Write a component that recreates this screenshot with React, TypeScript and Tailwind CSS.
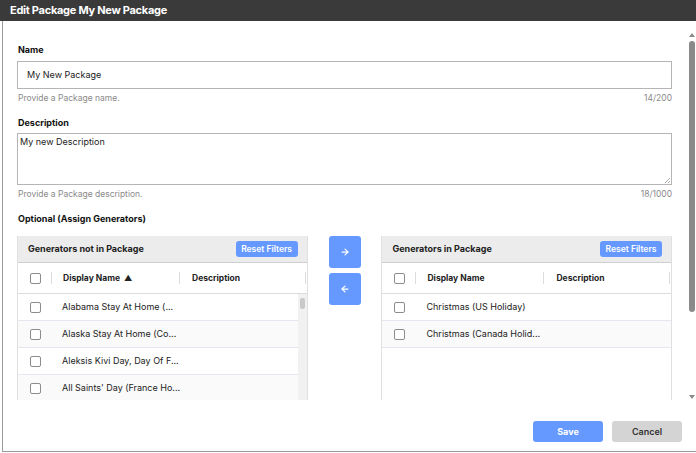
import { ArrowRight, ArrowLeft } from "lucide-react";

const leftRows = [
  "Alabama Stay At Home (...",
  "Alaska Stay At Home (Co...",
  "Aleksis Kivi Day, Day Of F...",
  "All Saints' Day (France Ho...",
];

const rightRows = ["Christmas (US Holiday)", "Christmas (Canada Holid..."];

function Box() {
  return <div className="w-[11px] h-[11px] border border-[#8c8c8c] rounded-[2px] bg-white" />;
}

function Grid({
  title,
  rows,
  sorted,
  scroll,
}: {
  title: string;
  rows: string[];
  sorted?: boolean;
  scroll?: boolean;
}) {
  return (
    <div className="flex flex-col w-[291px] h-[166px] overflow-hidden border-x border-[#e0e0e0]">
      {/* grid title bar */}
      <div className="h-[27px] shrink-0 bg-[#ececec] border-b border-[#cfcfcf] flex items-center justify-between pl-[10px] pr-[9px]">
        <span className="text-[9px] font-bold text-[#222]">{title}</span>
        <button className="h-[16px] w-[62px] rounded-[3px] bg-[#6699ff] text-white text-[8.5px] font-semibold">
          Reset Filters
        </button>
      </div>
      {/* column headers */}
      <div className="h-[31px] shrink-0 bg-white border-b border-[#dcdcdc] flex items-center text-[8.5px] font-bold text-[#222]">
        <div className="w-[33px] flex justify-end pr-[10px]">
          <Box />
        </div>
        <div className="w-px h-[12px] bg-[#dcdcdc]" />
        <div className="w-[127px] pl-[11px] flex items-center gap-[4px]">
          Display Name
          {sorted && <span className="text-[8px]">▲</span>}
        </div>
        <div className="w-px h-[12px] bg-[#dcdcdc]" />
        <div className="flex-1 pl-[12px]">Description</div>
        <div className="w-px h-[12px] bg-[#dcdcdc] mr-[1px]" />
      </div>
      <div className="flex flex-1">
        <div className="flex-1 flex flex-col">
          {rows.map((r, i) => (
            <div
              key={r}
              className={`h-[27px] shrink-0 flex items-center border-b border-[#e6e6ee] text-[9px] text-[#222] ${
                i % 2 === 1 ? "bg-[#fafafa]" : "bg-white"
              }`}
            >
              <div className="w-[33px] flex justify-end pr-[10px]">
                <Box />
              </div>
              <div className="pl-[11px] whitespace-nowrap">{r}</div>
            </div>
          ))}
        </div>
        {scroll && (
          <div className="w-[9px] bg-[#f1f1f1] flex justify-center pt-[4px]">
            <div className="w-[5px] h-[11px] rounded-[2px] bg-[#c9c9c9]" />
          </div>
        )}
      </div>
    </div>
  );
}

export default function App() {
  return (
    <div
      className="w-[696px] h-[453px] overflow-hidden bg-white flex flex-col"
      style={{ fontFamily: "Inter, 'Liberation Sans', sans-serif" }}
    >
      {/* title bar */}
      <div className="h-[21px] shrink-0 bg-[#3a3a3a] flex items-center pl-[10px]">
        <h1 className="text-[11px] font-bold text-white tracking-tight">Edit Package My New Package</h1>
      </div>

      <div className="ml-[2px] h-[431px] border-l border-b border-[#9a9a9a] flex flex-col">
        <div className="h-[379px] flex">
          {/* scrolling body */}
          <div className="w-[686px] overflow-hidden pl-[14px] pt-[23px]">
            <div className="w-[655px]">
              <label className="block pl-px text-[9px] font-bold text-[#111] leading-[12px]">Name</label>
              <div className="mt-[5px] h-[28px] border border-[#b5b5b5] flex items-center pl-[9px] text-[9px] text-[#222]">
                My New Package
              </div>
              <div className="mt-[3px] pl-px flex justify-between text-[8.5px] text-[#8a8a8a] leading-[12px]">
                <span>Provide a Package name.</span>
                <span>14/200</span>
              </div>

              <label className="block pl-px mt-[13px] text-[9px] font-bold text-[#111] leading-[12px]">Description</label>
              <div className="relative mt-[4px] h-[52px] border border-[#b5b5b5] pl-[2px] pt-[1px] text-[9px] text-[#222]">
                My new Description
                <svg className="absolute right-[1px] bottom-[1px]" width="6" height="6" viewBox="0 0 6 6">
                  <path d="M6 1 L1 6 M6 4 L4 6" stroke="#999" strokeWidth="0.8" />
                </svg>
              </div>
              <div className="mt-[3px] pl-px flex justify-between text-[8.5px] text-[#8a8a8a] leading-[12px]">
                <span>Provide a Package description.</span>
                <span>18/1000</span>
              </div>

              <label className="block pl-px mt-[13px] text-[9px] font-bold text-[#111] leading-[12px]">
                Optional (Assign Generators)
              </label>

              <div className="mt-[11px] flex items-start">
                <Grid title="Generators not in Package" rows={leftRows} sorted scroll />
                <div className="w-[74px] flex flex-col items-center gap-[5px]">
                  <button className="w-[32px] h-[32px] rounded-[3px] bg-[#6699ff] flex items-center justify-center text-white">
                    <ArrowRight size={10} strokeWidth={3} />
                  </button>
                  <button className="w-[32px] h-[32px] rounded-[3px] bg-[#6699ff] flex items-center justify-center text-white">
                    <ArrowLeft size={10} strokeWidth={3} />
                  </button>
                </div>
                <Grid title="Generators in Package" rows={rightRows} />
              </div>
            </div>
          </div>
          {/* page scrollbar */}
          <div className="w-[8px] flex flex-col items-center pt-[12px]">
            <span className="w-0 h-0 border-x-[3px] border-x-transparent border-b-[4px] border-b-[#8a8a8a]" />
            <div className="mt-[4px] w-[6px] h-[271px] rounded-[3px] bg-[#8a8a8a]" />
            <div className="flex-1" />
            <span className="mb-[1px] w-0 h-0 border-x-[3px] border-x-transparent border-t-[4px] border-t-[#8a8a8a]" />
          </div>
        </div>

        {/* footer */}
        <div className="flex-1 flex justify-end items-start pt-[21px] pr-[14px] gap-[9px]">
          <button className="w-[70px] h-[21px] rounded-[3px] bg-[#6699ff] text-white text-[9px] font-bold">Save</button>
          <button className="w-[70px] h-[21px] rounded-[3px] bg-[#d4d4d4] text-[#333] text-[9px] font-semibold">
            Cancel
          </button>
        </div>
      </div>
    </div>
  );
}
